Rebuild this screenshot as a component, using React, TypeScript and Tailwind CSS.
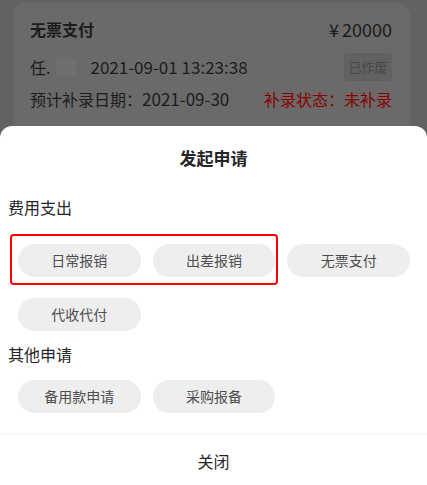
const font = { fontFamily: '"Noto Sans CJK SC", "Noto Sans", sans-serif' };

const feeItems = ['日常报销', '出差报销', '无票支付', '代收代付'];
const otherItems = ['备用款申请', '采购报备'];

function ItemButton({ label }: { label: string }) {
  return (
    <button className="h-[33px] rounded-full bg-[#eeeeee] text-[14px] text-[#4d4d4d]">
      {label}
    </button>
  );
}

function RecordCard() {
  return (
    <div className="ml-[13px] mt-[3px] h-[160px] w-[397px] rounded-[12px] bg-[#6a6a6a] pl-[17px] pr-[18px] pt-[14px] text-[#1c1c1c]">
      <div className="flex h-[24px] items-center justify-between">
        <span className="text-[16px] font-bold">无票支付</span>
        <span className="text-[18px]">
          ¥<span className="ml-[3px]">20000</span>
        </span>
      </div>
      <div className="mt-[12px] flex h-[28px] items-center">
        <span className="text-[16px]">任.</span>
        <span className="ml-[6px] h-[17px] w-[20px] bg-[#6f6f6f]" />
        <span className="ml-[14px] text-[17px]">2021-09-01 13:23:38</span>
        <span className="ml-auto flex h-[28px] w-[48px] items-center justify-center rounded-[4px] bg-[#616161] text-[13px] text-[#474747]">
          已作废
        </span>
      </div>
      <div className="mt-[7px] flex h-[22px] items-center justify-between text-[16px]">
        <span>
          预计补录日期：<span className="text-[17px]">2021-09-30</span>
        </span>
        <span className="text-[#8a0000]">补录状态：未补录</span>
      </div>
      <div className="mt-[13px] text-[16px]">备注：</div>
    </div>
  );
}

export default function App() {
  return (
    <div style={font} className="relative h-[485px] w-[427px] overflow-hidden bg-[#626262]">
      <RecordCard />

      <div className="absolute inset-x-0 bottom-0 top-[126px] rounded-t-[12px] bg-white">
        <div className="flex h-[64px] items-center justify-center text-[17px] font-bold text-[#262626]">
          发起申请
        </div>

        <div className="mt-[6px] flex h-[22px] items-center pl-[8px] text-[16px] text-[#262626]">费用支出</div>
        <div className="mt-[26px] grid grid-cols-3 gap-x-[12px] gap-y-[21px] pl-[18px] pr-[17px]">
          {feeItems.map((t) => (
            <ItemButton key={t} label={t} />
          ))}
        </div>

        <div className="mt-[12px] flex h-[22px] items-center pl-[8px] text-[16px] text-[#262626]">其他申请</div>
        <div className="mt-[15px] grid grid-cols-3 gap-x-[12px] pl-[18px] pr-[17px]">
          {otherItems.map((t) => (
            <ItemButton key={t} label={t} />
          ))}
        </div>

        <div className="mt-[21px] border-t border-[#f5f5f5]" />
        <div className="flex h-[52px] items-center justify-center text-[16px] text-[#262626]">关闭</div>

        {/* highlight box */}
        <div className="absolute left-[10px] top-[108px] h-[51px] w-[268px] rounded-[4px] border-2 border-[#ff0000]" />
      </div>
    </div>
  );
}
